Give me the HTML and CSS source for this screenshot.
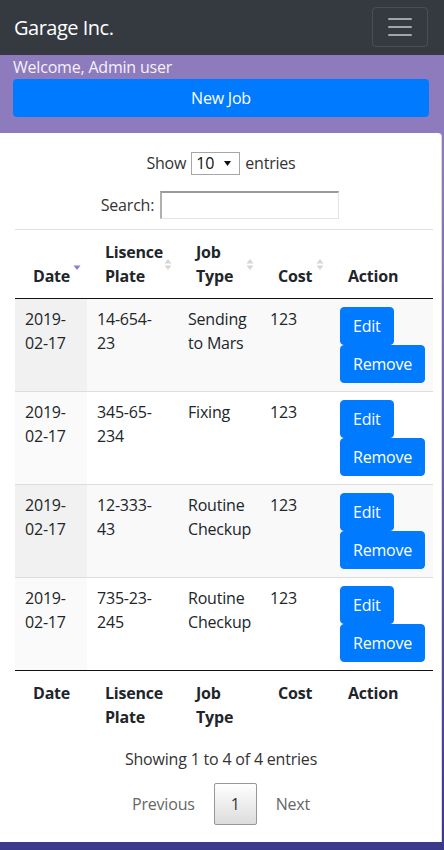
FILE: index.html
```html
<!DOCTYPE html>
<html lang="en">
<head>
<meta charset="utf-8">
<title>Garage Inc.</title>
<link rel="stylesheet" href="styles.css">
</head>
<body>
<nav class="navbar">
  <span class="brand">Garage Inc.</span>
  <button class="toggler" aria-label="Toggle navigation">
    <svg width="30" height="30" viewBox="0 0 30 30"><path stroke="rgba(255,255,255,0.55)" stroke-width="2" stroke-linecap="round" d="M4 7h22M4 15h22M4 23h22"/></svg>
  </button>
</nav>
<div class="hero">
  <div class="welcome">Welcome, Admin user</div>
  <button class="btn-new">New Job</button>
</div>
<div class="card">
  <div class="length">
    <span>Show</span>
    <span class="select"><span>10</span><svg width="7" height="5" viewBox="0 0 7 5"><path d="M0 0h7L3.5 5z" fill="#111"/></svg></span>
    <span>entries</span>
  </div>
  <div class="filter">
    <span>Search:</span>
    <span class="search-input"></span>
  </div>
  <table class="jobs">
    <colgroup>
      <col class="c1"><col class="c2"><col class="c3"><col class="c4"><col class="c5">
    </colgroup>
    <thead>
      <tr>
        <th class="sort">Date<svg class="sort-icon" width="8" height="13" viewBox="0 0 8 13"><path d="M0.5 7.5h7L4 12z" fill="#8383cd"/></svg></th>
        <th class="sort">Lisence Plate<svg class="sort-icon" width="8" height="13" viewBox="0 0 8 13"><path d="M0.5 5.5h7L4 1z M0.5 7.5h7L4 12z" fill="#d6d6d6"/></svg></th>
        <th class="sort">Job Type<svg class="sort-icon" width="8" height="13" viewBox="0 0 8 13"><path d="M0.5 5.5h7L4 1z M0.5 7.5h7L4 12z" fill="#d6d6d6"/></svg></th>
        <th class="sort">Cost<svg class="sort-icon" width="8" height="13" viewBox="0 0 8 13"><path d="M0.5 5.5h7L4 1z M0.5 7.5h7L4 12z" fill="#d6d6d6"/></svg></th>
        <th>Action</th>
      </tr>
    </thead>
    <tbody>
      <tr class="odd">
        <td class="sorted">2019-02-17</td><td>14-654-23</td><td>Sending to Mars</td><td>123</td>
        <td><div class="actions"><button class="btn">Edit</button><button class="btn">Remove</button></div></td>
      </tr>
      <tr class="even">
        <td class="sorted">2019-02-17</td><td>345-65-234</td><td>Fixing</td><td>123</td>
        <td><div class="actions"><button class="btn">Edit</button><button class="btn">Remove</button></div></td>
      </tr>
      <tr class="odd">
        <td class="sorted">2019-02-17</td><td>12-333-43</td><td>Routine Checkup</td><td>123</td>
        <td><div class="actions"><button class="btn">Edit</button><button class="btn">Remove</button></div></td>
      </tr>
      <tr class="even">
        <td class="sorted">2019-02-17</td><td>735-23-245</td><td>Routine Checkup</td><td>123</td>
        <td><div class="actions"><button class="btn">Edit</button><button class="btn">Remove</button></div></td>
      </tr>
    </tbody>
    <tfoot>
      <tr><th>Date</th><th>Lisence Plate</th><th>Job Type</th><th>Cost</th><th>Action</th></tr>
    </tfoot>
  </table>
  <div class="info">Showing 1 to 4 of 4 entries</div>
  <div class="paginate">
    <span class="pbtn">Previous</span>
    <span class="pbtn current">1</span>
    <span class="pbtn">Next</span>
  </div>
</div>
</body>
</html>
```
FILE: styles.css
```css
html {
  background: #3b398b;
}
body {
  margin: 0;
  min-height: 850px;
  font-family: "Open Sans", "Noto Sans", sans-serif;
  font-size: 16px;
  line-height: 1.5;
  letter-spacing: -0.2px;
  color: #212529;
  background: linear-gradient(to bottom, #8e7bbe 0px, #8e7bbe 160px, #3b398b 850px);
}
.navbar {
  box-sizing: border-box;
  height: 55px;
  background: #343a40;
  display: flex;
  justify-content: space-between;
  align-items: center;
  padding: 0 16px 0 14px;
}
.brand {
  color: #fff;
  font-size: 20px;
  line-height: 30px;
  letter-spacing: -0.5px;
}
.toggler {
  box-sizing: border-box;
  width: 56px;
  height: 40px;
  margin-top: -1px;
  padding: 0;
  background: transparent;
  border: 1px solid rgba(255, 255, 255, 0.1);
  border-radius: 4px;
  display: flex;
  align-items: center;
  justify-content: center;
}
.hero {
  padding: 0 15px 16px 13px;
}
.welcome {
  color: #f4f1fb;
  line-height: 24px;
}
.btn-new {
  display: block;
  width: 100%;
  height: 38px;
  background: #007bff;
  color: #fff;
  border: 0;
  border-radius: 4px;
  font-family: inherit;
  font-size: 16px;
  letter-spacing: inherit;
  padding: 0;
}
.card {
  background: #fff;
  margin-right: 2px;
  border-right: 1px solid #d9d9de;
  border-top-right-radius: 4px;
  padding: 18px 8px 17px 15px;
}
.length {
  display: flex;
  justify-content: center;
  align-items: center;
  gap: 5px;
  line-height: 24px;
  color: #333;
  padding-right: 6px;
}
.select {
  box-sizing: border-box;
  width: 49px;
  height: 23px;
  border: 1px solid #a6a6a6;
  display: flex;
  align-items: center;
  justify-content: space-between;
  padding: 0 8px 0 4px;
  line-height: 21px;
  color: #111;
}
.filter {
  margin-top: 16px;
  display: flex;
  justify-content: center;
  align-items: center;
  gap: 6px;
  height: 28px;
  color: #333;
  padding-right: 8px;
}
.search-input {
  box-sizing: border-box;
  width: 179px;
  height: 28px;
  border-top: 2px solid #9a9a9a;
  border-left: 2px solid #b0b0b0;
  border-right: 1px solid #e3e3e3;
  border-bottom: 1px solid #e3e3e3;
}
.jobs {
  margin-top: 10px;
  width: 418px;
  table-layout: fixed;
  border-collapse: collapse;
}
.c1 { width: 72px; }
.c2 { width: 91px; }
.c3 { width: 82px; }
.c4 { width: 70px; }
.c5 { width: 103px; }
.jobs thead th {
  position: relative;
  text-align: left;
  vertical-align: bottom;
  font-weight: 700;
  padding: 10px 18px;
  border-top: 1px solid #dee2e6;
  border-bottom: 1px solid #111;
}
.sort-icon {
  position: absolute;
  right: 6px;
  top: 28px;
}
.jobs td {
  vertical-align: top;
  padding: 8px 10px;
  border-top: 1px solid #dddddd;
}
.jobs tr.odd td {
  background: #f9f9f9;
}
.jobs tr.odd td.sorted {
  background: #f1f1f1;
}
.jobs tr.even td.sorted {
  background: #fafafa;
}
.actions {
  display: flex;
  flex-wrap: wrap;
}
.btn {
  box-sizing: border-box;
  height: 38px;
  padding: 6px 12px;
  font-family: inherit;
  font-size: 16px;
  letter-spacing: inherit;
  line-height: 24px;
  color: #fff;
  background: #007bff;
  border: 1px solid #007bff;
  border-radius: 4px;
  white-space: nowrap;
}
.jobs tfoot th {
  text-align: left;
  vertical-align: top;
  font-weight: 700;
  padding: 10px 18px 6px;
  border-top: 1px solid #111;
}
.info {
  text-align: center;
  padding-top: 12px;
  padding-right: 6px;
  line-height: 24px;
  color: #333;
}
.paginate {
  display: flex;
  justify-content: center;
  padding-top: 12px;
  padding-right: 8px;
}
.pbtn {
  padding: 8px 16px;
  margin-left: 2px;
  line-height: 24px;
  border: 1px solid transparent;
  border-radius: 2px;
  color: #666;
}
.pbtn.current {
  border-color: #979797;
  background: linear-gradient(to bottom, #ffffff 0%, #dcdcdc 100%);
  color: #333;
}
```
